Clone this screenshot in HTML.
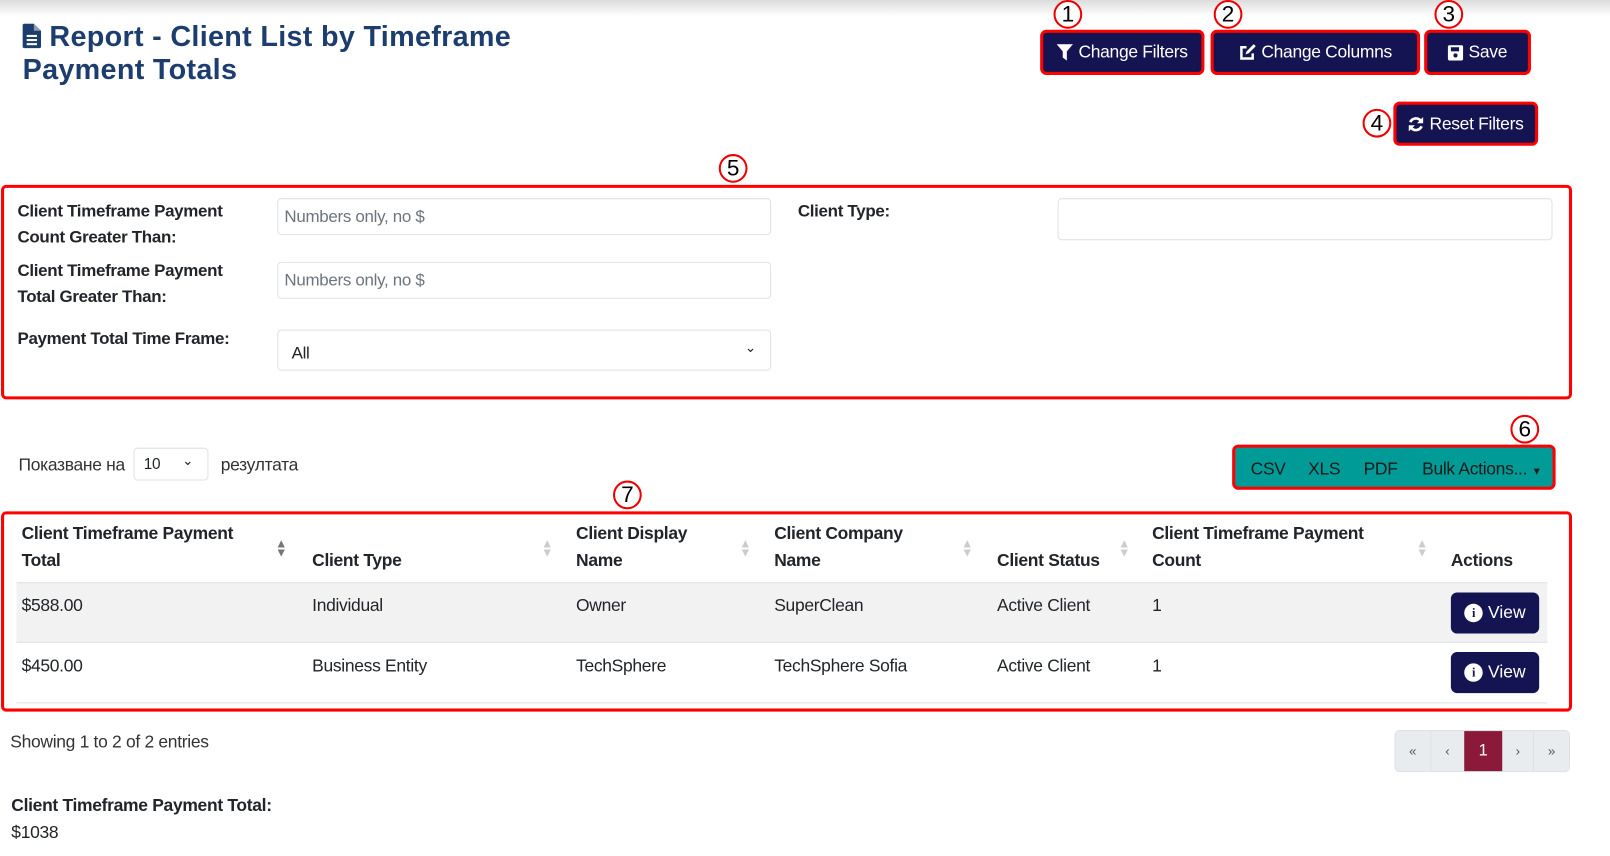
<!DOCTYPE html>
<html><head><meta charset="utf-8"><style>
*{box-sizing:border-box;margin:0;padding:0}
html,body{width:1610px;height:856px;overflow:hidden;background:#fff}
#w{position:absolute;left:0;top:0;width:1568px;height:834px;transform:scale(1.0268);transform-origin:0 0;font-family:"Liberation Sans",sans-serif;color:#212529;font-size:17px}
.a{position:absolute;white-space:nowrap}
.top{position:absolute;left:0;top:0;width:1568px;height:16px;background:linear-gradient(#dcdcdc,#fff)}
h1{position:absolute;left:22px;top:20px;font-size:28px;line-height:32px;color:#1c3d6e;font-weight:bold;letter-spacing:.3px;white-space:nowrap}
.btn{position:absolute;background:#141452;color:#fff;border:3px solid #f00;border-radius:6px;display:flex;align-items:center;justify-content:center;font-size:17px;letter-spacing:-.3px;gap:5px}
.c{position:absolute;width:28px;height:28px;border:2px solid #e00;border-radius:50%;background:#fff;font-size:22px;display:flex;align-items:center;justify-content:center;color:#000}
.box{position:absolute;border:3px solid #f00;border-radius:5px}
.lbl{position:absolute;font-weight:bold;font-size:16.5px;line-height:25px;letter-spacing:-.3px}
.inp{position:absolute;border:1px solid #dee2e6;border-radius:4px;font-size:16.5px;color:#6c757d;padding-left:6px;display:flex;align-items:center;letter-spacing:-.3px}
.th{position:absolute;font-weight:bold;font-size:17px;line-height:26px;letter-spacing:-.3px}
.td{position:absolute;font-size:17px;letter-spacing:-.3px}
.sort{position:absolute;color:#ccc;font-size:12px;line-height:9px;text-align:center}
.view{position:absolute;width:86px;height:40px;background:#141452;color:#fff;border-radius:6px;display:flex;align-items:center;justify-content:center;gap:5px;font-size:17px}
.ii{width:18px;height:18px;border-radius:50%;background:#fff;color:#141452;font-size:12px;font-weight:bold;display:flex;align-items:center;justify-content:center;font-family:"Liberation Serif",serif}
</style></head><body><div id="w">
<div class="top"></div>
<h1><svg width="18" height="24" viewBox="0 0 18 24" style="vertical-align:-2px"><path d="M2 0h9l7 7v15a2 2 0 0 1-2 2H2a2 2 0 0 1-2-2V2a2 2 0 0 1 2-2z" fill="#1c3d6e"/><path d="M11 0v7h7" fill="#fff" opacity=".5"/><rect x="4" y="11" width="10" height="2" fill="#fff"/><rect x="4" y="15" width="10" height="2" fill="#fff"/><rect x="4" y="19" width="10" height="2" fill="#fff"/></svg> Report - Client List by Timeframe<br>Payment Totals</h1>

<div class="btn" style="left:1013px;top:29px;width:160px;height:44px"><svg width="16" height="16" viewBox="0 0 16 16"><path d="M0 0h16l-6 7v9l-4-3V7z" fill="#fff"/></svg>Change Filters</div>
<div class="btn" style="left:1179px;top:29px;width:204px;height:44px"><svg width="17" height="17" viewBox="0 0 17 17"><path d="M8 3H3v11h11V9" fill="none" stroke="#fff" stroke-width="2.4"/><path d="M7 10l1-3 7-7 2 2-7 7z" fill="#fff"/></svg>Change Columns</div>
<div class="btn" style="left:1387px;top:29px;width:104px;height:44px"><svg width="15" height="15" viewBox="0 0 15 15"><rect width="15" height="15" rx="2" fill="#fff"/><rect x="3" y="2" width="8" height="4" fill="#141452"/><circle cx="7.5" cy="10" r="2" fill="#141452"/></svg>Save</div>
<div class="btn" style="left:1357px;top:99px;width:141px;height:43px"><svg width="16" height="16" viewBox="0 0 16 16"><path d="M13 5A6 6 0 0 0 2.5 6M3 11a6 6 0 0 0 10.5-1" fill="none" stroke="#fff" stroke-width="2.6"/><path d="M15 1v6H9zM1 15V9h6z" fill="#fff"/></svg>Reset Filters</div>

<div class="c" style="left:1026px;top:0px">1</div>
<div class="c" style="left:1182px;top:0px">2</div>
<div class="c" style="left:1397px;top:0px">3</div>
<div class="c" style="left:1327px;top:106px">4</div>
<div class="c" style="left:700px;top:150px">5</div>
<div class="c" style="left:1471px;top:404px">6</div>
<div class="c" style="left:597px;top:468px">7</div>

<div class="box" style="left:1px;top:180px;width:1530px;height:209px"></div>
<div class="lbl" style="left:17px;top:194px">Client Timeframe Payment<br>Count Greater Than:</div>
<div class="lbl" style="left:17px;top:252px">Client Timeframe Payment<br>Total Greater Than:</div>
<div class="lbl" style="left:17px;top:318px">Payment Total Time Frame:</div>
<div class="lbl" style="left:777px;top:194px">Client Type:</div>
<div class="inp" style="left:270px;top:193px;width:481px;height:36px">Numbers only, no $</div>
<div class="inp" style="left:270px;top:255px;width:481px;height:36px">Numbers only, no $</div>
<div class="inp" style="left:270px;top:321px;width:481px;height:40px;color:#212529;padding-left:13px;padding-top:6px">All<span style="position:absolute;right:14px;top:9px;font-size:13px">&#8964;</span></div>
<div class="inp" style="left:1030px;top:193px;width:482px;height:41px"></div>

<div class="td" style="left:18px;top:443px;color:#333">Показване на</div>
<div class="inp" style="left:130px;top:436px;width:73px;height:32px;color:#212529;font-size:15px;padding-left:9px">10<span style="position:absolute;right:14px;top:4px;font-size:13px">&#8964;</span></div>
<div class="td" style="left:215px;top:443px;color:#333">резултата</div>

<div style="position:absolute;left:1200px;top:433px;width:315px;height:44px;background:#009b96;border:3px solid #f00;border-radius:6px;font-size:17px;color:#1a1a1a;letter-spacing:-.3px">
<span class="a" style="left:15px;top:11px">CSV</span><span class="a" style="left:71px;top:11px">XLS</span><span class="a" style="left:125px;top:11px">PDF</span><span class="a" style="left:182px;top:11px">Bulk Actions... <span style="font-size:10px">&#9660;</span></span></div>

<div class="box" style="left:1px;top:498px;width:1530px;height:195px"></div>
<div class="th" style="left:21px;top:507px">Client Timeframe Payment<br>Total</div>
<div class="sort" style="left:268px;top:525px;color:#777">&#9650;<br>&#9660;</div>
<div class="th" style="left:304px;top:533px">Client Type</div>
<div class="sort" style="left:527px;top:525px">&#9650;<br>&#9660;</div>
<div class="th" style="left:561px;top:507px">Client Display<br>Name</div>
<div class="sort" style="left:720px;top:525px">&#9650;<br>&#9660;</div>
<div class="th" style="left:754px;top:507px">Client Company<br>Name</div>
<div class="sort" style="left:936px;top:525px">&#9650;<br>&#9660;</div>
<div class="th" style="left:971px;top:533px">Client Status</div>
<div class="sort" style="left:1089px;top:525px">&#9650;<br>&#9660;</div>
<div class="th" style="left:1122px;top:507px">Client Timeframe Payment<br>Count</div>
<div class="sort" style="left:1379px;top:525px">&#9650;<br>&#9660;</div>
<div class="th" style="left:1413px;top:533px">Actions</div>

<div style="position:absolute;left:16px;top:567px;width:1491px;height:59px;background:#f2f2f2;border-top:1px solid #dee2e6;border-bottom:1px solid #dee2e6"></div>
<div style="position:absolute;left:16px;top:684px;width:1491px;height:1px;background:#dee2e6"></div>
<div class="td" style="left:21px;top:580px">$588.00</div><div class="td" style="left:304px;top:580px">Individual</div><div class="td" style="left:561px;top:580px">Owner</div><div class="td" style="left:754px;top:580px">SuperClean</div><div class="td" style="left:971px;top:580px">Active Client</div><div class="td" style="left:1122px;top:580px">1</div>
<div class="view" style="left:1413px;top:577px"><span class="ii">i</span>View</div>
<div class="td" style="left:21px;top:639px">$450.00</div><div class="td" style="left:304px;top:639px">Business Entity</div><div class="td" style="left:561px;top:639px">TechSphere</div><div class="td" style="left:754px;top:639px">TechSphere Sofia</div><div class="td" style="left:971px;top:639px">Active Client</div><div class="td" style="left:1122px;top:639px">1</div>
<div class="view" style="left:1413px;top:635px"><span class="ii">i</span>View</div>

<div class="td" style="left:10px;top:713px;color:#333">Showing 1 to 2 of 2 entries</div>
<div style="position:absolute;left:1358px;top:711px;width:171px;height:41px;background:#e9ecef;border:1px solid #dee2e6;border-radius:5px;display:flex;font-size:13px;color:#555">
<div style="width:35px;display:flex;align-items:center;justify-content:center;border-right:1px solid #dee2e6">«</div>
<div style="width:32px;display:flex;align-items:center;justify-content:center">‹</div>
<div style="width:38px;display:flex;align-items:center;justify-content:center;background:#8b1a3a;color:#fff;font-size:16px">1</div>
<div style="width:31px;display:flex;align-items:center;justify-content:center;border-right:1px solid #dee2e6">›</div>
<div style="width:34px;display:flex;align-items:center;justify-content:center">»</div>
</div>

<div class="td" style="left:11px;top:775px;font-weight:bold">Client Timeframe Payment Total:</div>
<div class="td" style="left:11px;top:801px">$1038</div>
</div></body></html>
